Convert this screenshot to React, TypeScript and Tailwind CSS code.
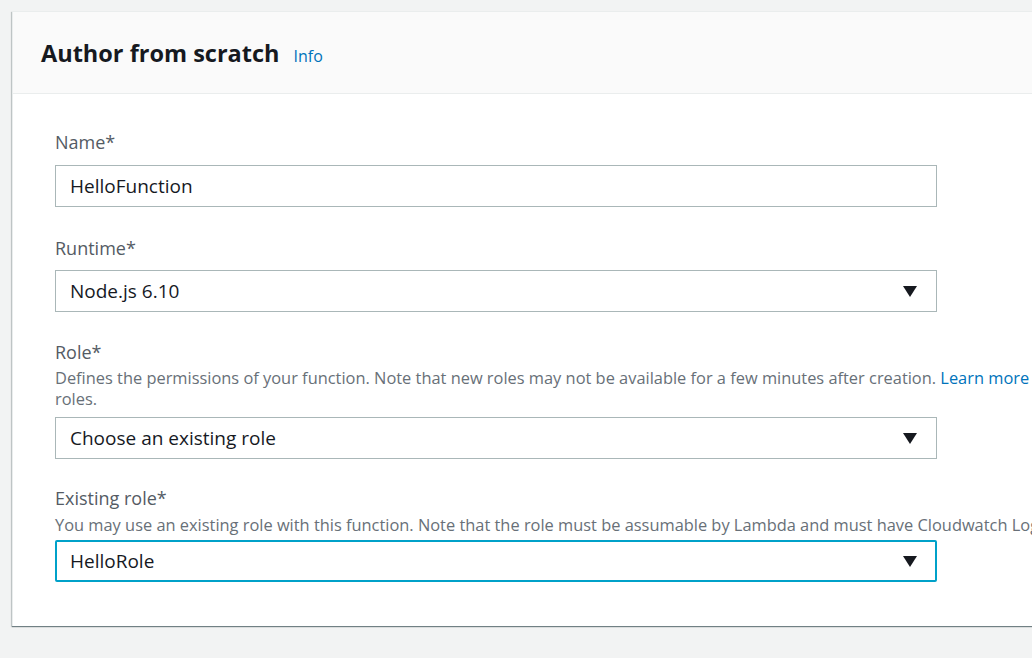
import React from 'react';

// Caret used by the select boxes
function Caret() {
    return (
        <svg width="14" height="11" viewBox="0 0 14 11" className="shrink-0">
            <path d="M0 0 H14 L7 11 Z" fill="#16191f" />
        </svg>
    );
}

function Label({ children }: { children: React.ReactNode }) {
    return <div className="text-[18px] leading-[24px] text-[#545b64]">{children}</div>;
}

function Select({ value, focused }: { value: string; focused?: boolean }) {
    return (
        <div
            className={`w-[882px] h-[42px] flex items-center justify-between bg-white text-[19px] text-[#16191f] ${
                focused ? 'border-2 border-[#00a1c9] rounded-[2px] pl-[13px] pr-[18px]' : 'border border-[#aab7b8] pl-[14px] pr-[19px]'
            }`}
        >
            <span>{value}</span>
            <Caret />
        </div>
    );
}

export default function App() {
    return (
        <div
            className="w-[1032px] h-[658px] overflow-hidden bg-[#f2f3f3] pt-[11px] pl-[12px]"
            style={{ fontFamily: '"Open Sans", "Noto Sans", sans-serif' }}
        >
            <div className="w-[1300px] bg-white border-t border-l border-[#eaeded] shadow-[0_1px_1px_0_rgba(0,28,36,0.45),-1px_1px_1px_0_rgba(0,28,36,0.15)]">
                {/* Header */}
                <div className="h-[82px] bg-[#fafafa] border-b border-[#eaeded] flex items-center pl-[28px] pt-[3px]">
                    <h2 className="text-[23.5px] font-bold text-[#16191f]">Author from scratch</h2>
                    <span className="ml-[14px] mt-[4px] text-[16px] text-[#0073bb]">Info</span>
                </div>

                {/* Body */}
                <div className="pl-[42px] pt-[36px] pb-[44px]">
                    <Label>Name*</Label>
                    <div className="mt-[11px] w-[882px] h-[42px] flex items-center border border-[#aab7b8] bg-white pl-[14px] text-[19px] text-[#16191f]">
                        HelloFunction
                    </div>

                    <div className="mt-[29px]">
                        <Label>Runtime*</Label>
                    </div>
                    <div className="mt-[10px]">
                        <Select value="Node.js 6.10" />
                    </div>

                    <div className="mt-[28px]">
                        <Label>Role*</Label>
                    </div>
                    <p className="mt-[3px] text-[16.4px] leading-[21px] text-[#687078] whitespace-nowrap">
                        Defines the permissions of your function. Note that new roles may not be available for a few minutes after creation.{' '}
                        <span className="text-[#0073bb]">Learn more</span> about Lambda execution
                        <br />
                        roles.
                    </p>
                    <div className="mt-[8px]">
                        <Select value="Choose an existing role" />
                    </div>

                    <div className="mt-[27px]">
                        <Label>Existing role*</Label>
                    </div>
                    <p className="mt-[4px] text-[16.4px] leading-[21px] text-[#687078] whitespace-nowrap">
                        You may use an existing role with this function. Note that the role must be assumable by Lambda and must have Cloudwatch Logs permissions.
                    </p>
                    <div className="mt-[5px]">
                        <Select value="HelloRole" focused />
                    </div>
                </div>
            </div>
        </div>
    );
}
